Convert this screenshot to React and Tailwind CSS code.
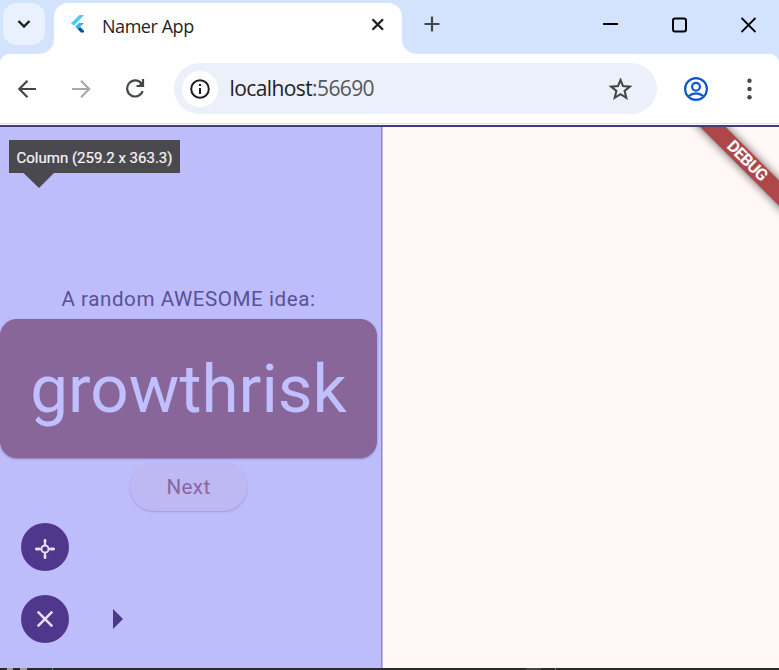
function TabStrip() {
  return (
    <header className="flex h-[54px] bg-[#d3e3fd]">
      <div className="w-[54px] pl-[3px] pt-[3px]">
        <button className="flex h-[42px] w-[42px] items-center justify-center rounded-[14px] bg-[#e9f1fe]">
          <svg width="14" height="10" viewBox="0 0 14 10" fill="none" stroke="#1f1f1f" strokeWidth="2.4">
            <path d="M1.5 2 L7 7.5 L12.5 2" />
          </svg>
        </button>
      </div>
      <div className="relative mt-[3px] flex h-[51px] w-[348px] items-center rounded-t-[14px] bg-white">
        <svg className="absolute -left-[15px] bottom-0" width="15" height="15" viewBox="0 0 15 15">
          <path d="M15 0 A15 15 0 0 1 0 15 H15Z" fill="#fff" />
        </svg>
        <svg className="absolute -right-[15px] bottom-0" width="15" height="15" viewBox="0 0 15 15">
          <path d="M0 0 A15 15 0 0 0 15 15 H0Z" fill="#fff" />
        </svg>
        <svg className="-mt-[9px] ml-[16px]" width="16" height="20" viewBox="0 0 16 20">
          <path d="M9.5 1 H14 L4 11.8 L1 9.2Z" fill="#54c5f8" />
          <path d="M9 9 H14 L9.8 13 L7.8 15.2 L5.2 12.7Z" fill="#29b6f6" />
          <path d="M7.6 15 L10.2 12.9 L14 16.8 V18.6 H10.8Z" fill="#01579b" />
        </svg>
        <span className="-mt-[6px] ml-[16px] w-[95px] whitespace-nowrap font-['Open_Sans',sans-serif] text-[18px] leading-6 tracking-[-0.45px] text-[#1f1f1f]">
          Namer App
        </span>
        <svg className="-mt-[9px] ml-auto mr-[18px]" width="13" height="13" viewBox="0 0 13 13" stroke="#1f1f1f" strokeWidth="2.3">
          <path d="M1.5 1.2 L12 11.7 M12 1.2 L1.5 11.7" />
        </svg>
      </div>
      <svg className="ml-[22px] mt-[16px]" width="16" height="16" viewBox="0 0 16 16" stroke="#444746" strokeWidth="2.2">
        <path d="M8 .5 V15.5 M.5 8 H15.5" />
      </svg>
      <div className="ml-auto flex pt-[17px]">
        <svg width="15" height="16" viewBox="0 0 15 16">
          <path d="M0 6h15v2H0z" fill="#000" />
        </svg>
        <svg className="ml-[54px]" width="15" height="16" viewBox="0 0 15 16" fill="none" stroke="#000" strokeWidth="2">
          <rect x="1" y="1.5" width="13" height="13" rx="2" />
        </svg>
        <svg className="ml-[54px] mr-[23px]" width="15" height="16" viewBox="0 0 15 16" stroke="#000" strokeWidth="1.9">
          <path d="M.5 1 L14.5 15 M14.5 1 L.5 15" />
        </svg>
      </div>
    </header>
  );
}

function Toolbar() {
  return (
    <div className="bg-[#d3e3fd]">
      <div className="flex h-[69px] items-center rounded-t-[9px] bg-white">
        <svg className="ml-[18px]" width="19" height="18" viewBox="0 0 19 18" fill="none" stroke="#444746" strokeWidth="2.2">
          <path d="M18 9 H2 M9.5 .8 L1.3 9 L9.5 17.2" />
        </svg>
        <svg className="ml-[35px]" width="19" height="18" viewBox="0 0 19 18" fill="none" stroke="#a8a9a9" strokeWidth="2.2">
          <path d="M0 9 H16.5 M9 .8 L17.2 9 L9 17.2" />
        </svg>
        <svg className="ml-[35px]" width="19" height="19" viewBox="0 0 19 19" fill="none" stroke="#444746" strokeWidth="2.2">
          <path d="M16.7 12.2 A8 8 0 1 1 15.2 4.2" />
          <path d="M17 0 V7 H10.5" />
          <path d="M17.5 1 V7 H12Z" fill="#444746" stroke="none" />
        </svg>
        <div className="ml-[29px] flex h-[51px] w-[483px] items-center rounded-full bg-[#ebf0fa]">
          <div className="ml-[8px] flex h-9 w-9 items-center justify-center rounded-full bg-white">
            <svg width="20" height="20" viewBox="0 0 20 20" fill="none" stroke="#1f1f1f" strokeWidth="2">
              <circle cx="10" cy="10" r="8.8" />
              <path d="M10 9 V15 M10 5 V7" />
            </svg>
          </div>
          <span className="-mt-px ml-[11.5px] whitespace-nowrap font-['Open_Sans',sans-serif] text-[21px] leading-7 tracking-[-0.6px] text-[#1f1f1f]">
            localhost<span className="text-[#54575a]">:56690</span>
          </span>
          <svg className="ml-auto mr-[25px]" width="23" height="22" viewBox="0 0 23 22" fill="none" stroke="#444746" strokeWidth="2.1">
            <path d="M11.5 2 L14 8.1 L20.9 8.6 L15.6 13 L17.3 19.8 L11.5 16.2 L5.7 19.8 L7.4 13 L2.1 8.6 L9 8.1Z" />
          </svg>
        </div>
        <svg className="ml-[27px]" width="24" height="24" viewBox="0 0 24 24" fill="none" stroke="#0b57d0" strokeWidth="2.2">
          <circle cx="12" cy="12" r="10.9" />
          <circle cx="12" cy="9.7" r="3.9" />
          <path d="M4.5 19.2 Q12 13.7 19.5 19.2" />
        </svg>
        <svg className="ml-[39px]" width="5" height="22" viewBox="0 0 5 22" fill="#444746">
          <circle cx="2.5" cy="2.8" r="2.2" />
          <circle cx="2.5" cy="11" r="2.2" />
          <circle cx="2.5" cy="19.2" r="2.2" />
        </svg>
      </div>
      <div className="h-px bg-[#dfe1e2]" />
      <div className="h-px bg-white" />
      <div className="h-[2px] bg-[#3f3f7f]" />
    </div>
  );
}

function SelectedColumn() {
  return (
    <section className="relative flex h-full w-[382px] flex-col border-r border-[#918ac6] bg-[#bebdfc] font-[Roboto,sans-serif]">
      <div className="absolute left-[9px] top-[13px] flex h-[33px] w-[171px] items-center whitespace-nowrap bg-[#4a494f] pl-[7.5px] pt-[3px] text-[15px] leading-none text-[#f5f5f7] [-webkit-text-stroke:0.2px_#f5f5f7]">
        Column (259.2 x 363.3)
        <svg className="absolute left-[14px] top-[33px]" width="32" height="15" viewBox="0 0 32 15">
          <path d="M0.5 0 H31 L16 15Z" fill="#4a494f" />
        </svg>
      </div>
      <div className="flex w-[377px] flex-col items-center pt-[160px]">
        <p className="whitespace-nowrap text-[20.6px] leading-6 tracking-[0.56px] text-[#5b5097]">A random AWESOME idea:</p>
        <div className="mt-[8px] flex h-[138.5px] w-full items-center justify-center rounded-[17px] bg-[#88669a] text-[67.4px] leading-none text-[#c0bfff] shadow-[0_1px_2px_rgba(80,60,120,0.5)]">
          growthrisk
        </div>
        <button className="mt-[5.5px] flex h-[48px] w-[117px] items-center justify-center rounded-full bg-[#beb8f3] pt-px text-[20.6px] tracking-[0.4px] text-[#88669f] shadow-[0_1px_2px_rgba(90,70,140,0.3)]">
          Next
        </button>
      </div>
      <div className="mt-[12px] flex flex-col gap-6 pl-[21px]">
        <button className="flex h-12 w-12 items-center justify-center rounded-full bg-[#4f378b] pt-[4px]">
          <svg width="20" height="20" viewBox="0 0 20 20" fill="none" stroke="#eaddff" strokeWidth="2" strokeLinecap="round">
            <circle cx="10" cy="10" r="3.6" />
            <path d="M10 1 V6 M10 14 V19 M1 10 H6 M14 10 H19" />
            <path d="M10 1.5 V3 M10 17 V18.5 M1.5 10 H4 M16 10 H18.5" strokeWidth="2.8" />
          </svg>
        </button>
        <div className="flex items-center">
          <button className="flex h-12 w-12 items-center justify-center rounded-full bg-[#4f378b]">
            <svg width="18" height="18" viewBox="0 0 18 18" stroke="#eaddff" strokeWidth="2.5">
              <path d="M1.7 1.7 L16.3 16.3 M16.3 1.7 L1.7 16.3" />
            </svg>
          </button>
          <svg className="ml-[44px]" width="10" height="20" viewBox="0 0 10 20">
            <path d="M0 0 L10 10 L0 20Z" fill="#4f378b" />
          </svg>
        </div>
      </div>
    </section>
  );
}

function DebugBanner() {
  return (
    <div className="absolute right-0 top-0 h-[120px] w-[120px] overflow-hidden">
      <div className="absolute left-[20.5px] top-[24.5px] flex h-[17.5px] w-[134px] rotate-45 items-center justify-center whitespace-nowrap bg-[#ae4749] font-[Roboto,sans-serif] text-[16.5px] font-bold leading-none tracking-[-0.7px] text-white shadow-[0_0_10px_rgba(0,0,0,0.65)]">
        DEBUG
      </div>
    </div>
  );
}

export default function App() {
  return (
    <div className="flex h-[670px] w-[779px] flex-col overflow-hidden bg-white">
      <TabStrip />
      <Toolbar />
      <main className="relative flex h-[541px] overflow-hidden bg-[#fff8f7]">
        <SelectedColumn />
        <div className="w-px bg-[#c5bbdc]" />
        <DebugBanner />
      </main>
      <footer className="flex h-[2px] bg-[#2b2b2c]">
        <div className="ml-[7px] h-[2px] w-[6px] bg-[#a39b94]" />
        <div className="ml-[7px] h-[2px] w-[7px] bg-[#a39b94]" />
        <div className="ml-[25px] h-[2px] w-px bg-[#4c8a9e]" />
        <div className="ml-[473px] h-[2px] w-[15px] bg-[#484848]" />
        <div className="ml-[14px] h-[2px] w-px bg-[#71809a]" />
      </footer>
    </div>
  );
}
